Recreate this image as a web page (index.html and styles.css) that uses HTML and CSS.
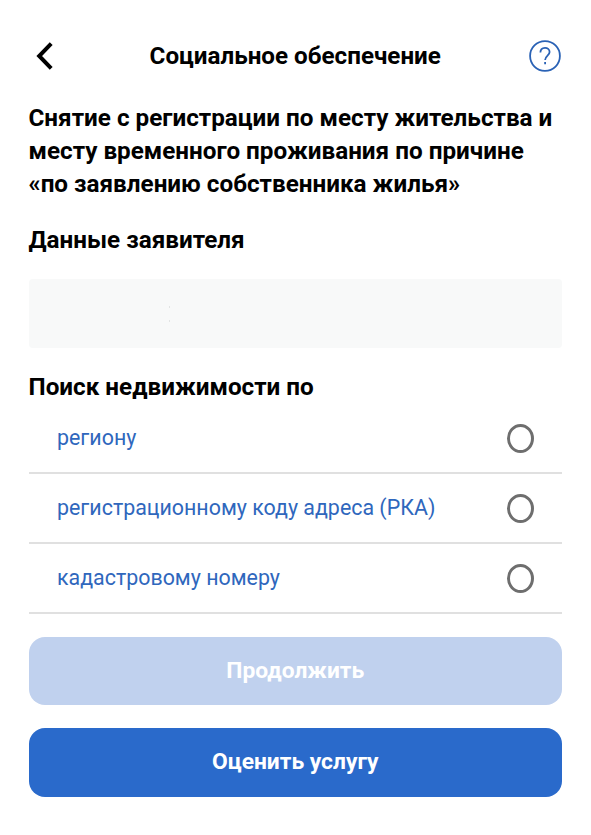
FILE: index.html
```html
<!DOCTYPE html>
<html lang="ru">
<head>
  <meta charset="UTF-8" />
  <meta name="viewport" content="width=device-width, initial-scale=1.0" />
  <title>Социальное обеспечение</title>
  <link rel="stylesheet" href="styles.css">
</head>
<body>
  <header>
    <button class="icon-btn back-btn" aria-label="Назад">
      <svg width="18" height="30" viewBox="0 0 18 30" fill="none" stroke="#000" stroke-width="4">
        <path d="M15.2 2.6 L3.2 15 L15.2 27.4" />
      </svg>
    </button>
    <div class="header-title">Социальное обеспечение</div>
    <button class="icon-btn help-btn" aria-label="Помощь">
      <svg width="32" height="32" viewBox="0 0 32 32" fill="none" stroke="#2a62b5" stroke-width="1.8">
        <circle cx="16" cy="16" r="14.9" />
        <path d="M11.4 12.6 C11.4 6.4 20.6 6.5 20.6 12 C20.6 15.6 16.1 15.6 16.1 20" />
        <path d="M16.1 22 V24.2" />
      </svg>
    </button>
  </header>

  <main>
    <h1>Снятие с регистрации по месту жительства и месту временного проживания по причине «по заявлению собственника жилья»</h1>

    <h2>Данные заявителя</h2>
    <div class="applicant"></div>

    <h2>Поиск недвижимости по</h2>
    <form class="options">
      <label class="option">
        <span>региону</span>
        <input type="radio" name="search" />
      </label>
      <label class="option">
        <span>регистрационному коду адреса (РКА)</span>
        <input type="radio" name="search" />
      </label>
      <label class="option">
        <span>кадастровому номеру</span>
        <input type="radio" name="search" />
      </label>
    </form>

    <div class="buttons">
      <button class="btn" disabled>Продолжить</button>
      <button class="btn">Оценить услугу</button>
    </div>
  </main>
</body>
</html>
```
FILE: styles.css
```css
* {
  box-sizing: border-box;
}
body {
  margin: 0;
  padding: 38px 29px 0 28.5px;
  font-family: Roboto, sans-serif;
  background-color: #fff;
  color: #000;
}
header {
  display: flex;
  justify-content: space-between;
  align-items: center;
  height: 36px;
}
.header-title {
  font-size: 24.2px;
  font-weight: 700;
  line-height: 28px;
}
.icon-btn {
  display: flex;
  align-items: center;
  width: 33px;
  padding: 0;
  border: none;
  background: none;
  cursor: pointer;
}
.back-btn {
  padding-left: 7px;
}

h1, h2 {
  margin: 0;
  font-size: 24.25px;
  font-weight: 700;
  line-height: 33px;
}
h1 {
  margin-top: 28px;
}
h2 {
  margin-top: 23px;
}
.applicant {
  height: 69px;
  margin-top: 22px;
  border-radius: 4px;
  background-color: #f8f9f9;
  /* two faint dots of the empty field */
  background-image: linear-gradient(#e2e4e4, #e2e4e4), linear-gradient(#e2e4e4, #e2e4e4);
  background-size: 1px 2px;
  background-position: 140px 27px, 140px 41px;
  background-repeat: no-repeat;
}

.options {
  display: flex;
  flex-direction: column;
}
.option {
  display: flex;
  justify-content: space-between;
  align-items: center;
  height: 70px;
  padding: 0 28px 0 28.5px;
  border-bottom: 2px solid #e0e0e0;
  font-size: 21.4px;
  line-height: 26px;
  color: #2f67bd;
}
input[type="radio"] {
  -webkit-appearance: none;
  appearance: none;
  width: 27px;
  height: 29px;
  margin: 0;
  border: 3px solid #6e6e6e;
  border-radius: 50%;
}

.buttons {
  display: flex;
  flex-direction: column;
  gap: 23px;
  margin-top: 22.5px;
}
.btn {
  height: 68.5px;
  padding: 0 0 1px;
  border: none;
  border-radius: 16px;
  background-color: #2a6acb;
  color: #fff;
  font-family: inherit;
  font-size: 22.8px;
  font-weight: 700;
  cursor: pointer;
}
.btn:disabled {
  background-color: #c0d1ee;
  cursor: default;
}
```
